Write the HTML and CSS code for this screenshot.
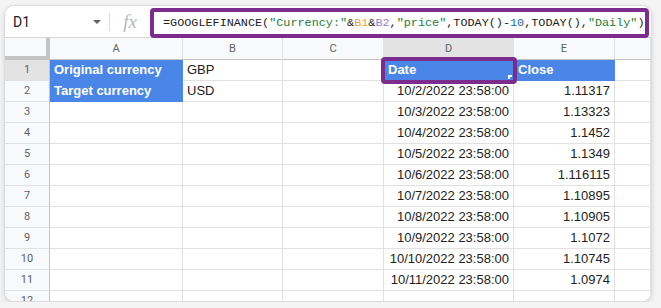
FILE: index.html
```html
<!DOCTYPE html>
<html lang="en">
<head>
    <meta charset="UTF-8">
    <title>GOOGLEFINANCE currency</title>
    <link rel="stylesheet" href="styles.css">
</head>
<body>
    <div class="sheet">
        <div class="formula-bar">
            <div class="name-box">
                <span>D1</span>
                <svg class="caret" width="8" height="4" viewBox="0 0 8 4"><path d="M0 0h8L4 4z" fill="#5f6368"/></svg>
            </div>
            <div class="fx">fx</div>
            <div class="formula">=GOOGLEFINANCE(<span class="str">"Currency:"</span>&amp;<span class="r1">B1</span>&amp;<span class="r2">B2</span>,<span class="str">"price"</span>,TODAY()-<span class="num">10</span>,TODAY(),<span class="str">"Daily"</span>)</div>
        </div>

        <div class="grid">
            <div class="corner"></div>
            <div class="col-head">A</div>
            <div class="col-head">B</div>
            <div class="col-head">C</div>
            <div class="col-head active">D</div>
            <div class="col-head">E</div>
            <div class="col-head"></div>

            <div class="row-head active">1</div>
            <div class="cell label">Original currency</div>
            <div class="cell">GBP</div>
            <div class="cell"></div>
            <div class="cell label selected">Date<span class="handle"></span></div>
            <div class="cell label">Close</div>
            <div class="cell"></div>

            <div class="row-head">2</div>
            <div class="cell label">Target currency</div>
            <div class="cell">USD</div>
            <div class="cell"></div>
            <div class="cell num">10/2/2022 23:58:00</div>
            <div class="cell num">1.11317</div>
            <div class="cell"></div>

            <div class="row-head">3</div>
            <div class="cell"></div><div class="cell"></div><div class="cell"></div>
            <div class="cell num">10/3/2022 23:58:00</div>
            <div class="cell num">1.13323</div>
            <div class="cell"></div>

            <div class="row-head">4</div>
            <div class="cell"></div><div class="cell"></div><div class="cell"></div>
            <div class="cell num">10/4/2022 23:58:00</div>
            <div class="cell num">1.1452</div>
            <div class="cell"></div>

            <div class="row-head">5</div>
            <div class="cell"></div><div class="cell"></div><div class="cell"></div>
            <div class="cell num">10/5/2022 23:58:00</div>
            <div class="cell num">1.1349</div>
            <div class="cell"></div>

            <div class="row-head">6</div>
            <div class="cell"></div><div class="cell"></div><div class="cell"></div>
            <div class="cell num">10/6/2022 23:58:00</div>
            <div class="cell num">1.116115</div>
            <div class="cell"></div>

            <div class="row-head">7</div>
            <div class="cell"></div><div class="cell"></div><div class="cell"></div>
            <div class="cell num">10/7/2022 23:58:00</div>
            <div class="cell num">1.10895</div>
            <div class="cell"></div>

            <div class="row-head">8</div>
            <div class="cell"></div><div class="cell"></div><div class="cell"></div>
            <div class="cell num">10/8/2022 23:58:00</div>
            <div class="cell num">1.10905</div>
            <div class="cell"></div>

            <div class="row-head">9</div>
            <div class="cell"></div><div class="cell"></div><div class="cell"></div>
            <div class="cell num">10/9/2022 23:58:00</div>
            <div class="cell num">1.1072</div>
            <div class="cell"></div>

            <div class="row-head">10</div>
            <div class="cell"></div><div class="cell"></div><div class="cell"></div>
            <div class="cell num">10/10/2022 23:58:00</div>
            <div class="cell num">1.10745</div>
            <div class="cell"></div>

            <div class="row-head">11</div>
            <div class="cell"></div><div class="cell"></div><div class="cell"></div>
            <div class="cell num">10/11/2022 23:58:00</div>
            <div class="cell num">1.0974</div>
            <div class="cell"></div>

            <div class="row-head">12</div>
            <div class="cell"></div><div class="cell"></div><div class="cell"></div>
            <div class="cell"></div><div class="cell"></div><div class="cell"></div>
        </div>
    </div>
</body>
</html>
```

FILE: styles.css
```css
body { margin: 0; background: #f4f4f4; font-family: "Liberation Sans", Arial, sans-serif; }

.sheet { margin: 5px 0 0 4px; width: 646px; height: 295px; background: #fff; border: 1px solid #dcdcdc; border-radius: 10px; overflow: hidden; box-shadow: 0 2px 5px rgba(0,0,0,.12); }

.formula-bar { display: flex; align-items: center; height: 31px; border-bottom: 1px solid #d6d6d6; }
.name-box { display: flex; align-items: center; justify-content: space-between; width: 88px; padding: 0 8px; height: 18px; border-right: 1px solid #dadce0; font-family: Roboto, sans-serif; font-size: 14px; color: #202124; }
.caret { margin-top: 1px; }
.fx { width: 40px; text-align: center; font-family: "Liberation Serif", serif; font-style: italic; font-size: 19px; color: #b8b8b8; }
.formula { flex: 1; margin: 2px 2px 0 0; height: 22px; line-height: 22px; border: 4px solid #7b2c8c; border-radius: 4px; padding-left: 9px; font-family: "Liberation Mono", monospace; font-size: 11.8px; color: #202124; white-space: nowrap; }
.str { color: #188038; }
.r1 { color: #e8a33d; }
.r2 { color: #9b7fd4; }
.num { color: #1a5fb4; }

.grid { display: grid; grid-template-columns: 45px 133px 100px 101px 130px 101px 1fr; grid-template-rows: 22px; grid-auto-rows: 21px; }
.grid > div { box-sizing: border-box; border-right: 1px solid #e1e1e1; border-bottom: 1px solid #e1e1e1; }

.corner { background: #f8f9fa; border-right: 4px solid #c4c4c4 !important; border-bottom: 4px solid #c4c4c4 !important; }
.col-head { background: #f8f9fa; color: #5f6368; font-family: Roboto, sans-serif; font-size: 11px; text-align: center; line-height: 21px; border-bottom-color: #c4c4c4 !important; }
.row-head { background: #f8f9fa; color: #5f6368; font-family: Roboto, sans-serif; font-size: 11px; text-align: center; line-height: 20px; border-right-color: #c4c4c4 !important; }
.col-head.active, .row-head.active { background: #e3e3e3; }

.cell { font-size: 13px; line-height: 20px; padding: 0 4px; color: #222; white-space: nowrap; }
.grid > .cell.num { text-align: right; color: #222; }
.label { background: #4a86e8; color: #fff; font-weight: bold; }
.grid > .label { border-right-color: #4a86e8; border-bottom-color: #4a86e8; }

.selected { position: relative; }
.selected::after { content: ""; position: absolute; left: -3px; top: -3px; right: -4px; bottom: -4px; border: 4px solid #7b2c8c; border-radius: 4px; }
.handle { position: absolute; right: 1px; bottom: 1px; width: 4px; height: 4px; border-top: 2px solid #fff; border-left: 2px solid #fff; box-sizing: border-box; }
```
